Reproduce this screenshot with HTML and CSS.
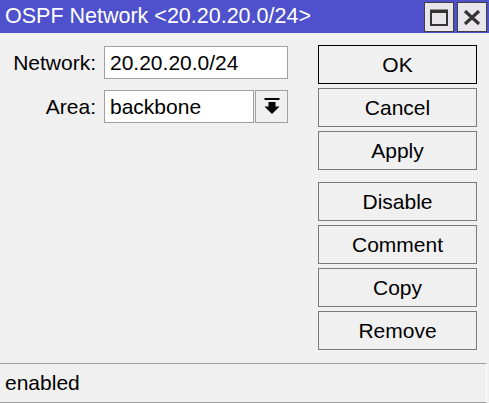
FILE: index.html
```html
<!DOCTYPE html>
<html>
<head>
<meta charset="utf-8">
<link rel="stylesheet" href="styles.css">
</head>
<body>
<div class="window">
  <div class="titlebar">
    <span class="title">OSPF Network &lt;20.20.20.0/24&gt;</span>
    <div class="tbtns">
      <div class="tbtn">
        <svg width="18" height="17" viewBox="0 0 18 17"><rect x="1" y="1.5" width="16" height="14.5" fill="none" stroke="#333" stroke-width="2"/><rect x="1" y="1" width="16" height="3" fill="#333"/></svg>
      </div>
      <div class="tbtn">
        <svg width="18" height="15" viewBox="0 0 18 15"><path d="M2 1 L16 14 M16 1 L2 14" stroke="#333" stroke-width="3.2"/></svg>
      </div>
    </div>
  </div>
  <div class="main">
    <div class="form">
      <div class="row">
        <label class="lbl">Network:</label>
        <div class="field wide">20.20.20.0/24</div>
      </div>
      <div class="row">
        <label class="lbl">Area:</label>
        <div class="field narrow">backbone</div>
        <div class="drop">
          <svg width="16" height="17" viewBox="0 0 16 17"><rect x="0.5" y="0" width="15" height="2" fill="#000"/><rect x="4.5" y="4" width="7" height="5" fill="#000"/><path d="M0.5 8.5 L15.5 8.5 L8 16 Z" fill="#000"/></svg>
        </div>
      </div>
    </div>
    <div class="buttons">
      <div class="btn default">OK</div>
      <div class="btn">Cancel</div>
      <div class="btn">Apply</div>
      <div class="btn sep">Disable</div>
      <div class="btn">Comment</div>
      <div class="btn">Copy</div>
      <div class="btn">Remove</div>
    </div>
  </div>
  <div class="status">enabled</div>
</div>
</body>
</html>
```

FILE: styles.css
```css
html, body {
  margin: 0;
  padding: 0;
  background: #f0f0f0;
}
body {
  font-family: "Liberation Sans", Arial, sans-serif;
  font-size: 21px;
  color: #000;
}
.window {
  width: 489px;
  height: 403px;
  display: flex;
  flex-direction: column;
}
.titlebar {
  height: 33px;
  background: #4e50cc;
  color: #fff;
  display: flex;
  align-items: center;
  justify-content: space-between;
  padding-left: 5px;
  padding-right: 2px;
  box-sizing: border-box;
}
.title {
  font-size: 21.5px;
  line-height: 33px;
  margin-top: -1px;
}
.tbtns {
  display: flex;
  gap: 3px;
  align-self: flex-start;
  margin-top: 2px;
}
.tbtn {
  width: 30px;
  height: 30px;
  box-sizing: border-box;
  background: #e8e6ea;
  border: 1px solid #404040;
  display: flex;
  align-items: center;
  justify-content: center;
}
.main {
  flex: 1;
  display: flex;
  justify-content: space-between;
  padding-top: 12px;
  padding-right: 12px;
}
.form {
  display: flex;
  flex-direction: column;
  gap: 11px;
  padding-top: 1px;
}
.row {
  display: flex;
  align-items: center;
}
.lbl {
  width: 96px;
  text-align: right;
  margin-right: 8px;
}
.field {
  height: 33px;
  box-sizing: border-box;
  background: #fff;
  border: 1px solid #a0a0a0;
  padding-left: 5px;
  line-height: 31px;
}
.wide { width: 184px; }
.narrow { width: 150px; }
.drop {
  width: 33px;
  height: 33px;
  box-sizing: border-box;
  margin-left: 1px;
  border: 1px solid #a0a0a0;
  background: #f0f0f0;
  display: flex;
  align-items: center;
  justify-content: center;
}
.buttons {
  width: 159px;
  display: flex;
  flex-direction: column;
  gap: 4px;
}
.btn {
  height: 39px;
  box-sizing: border-box;
  border: 1px solid #7a7a7a;
  background: #f0f0f0;
  display: flex;
  align-items: center;
  justify-content: center;
}
.btn.default {
  border-color: #000;
}
.btn.sep {
  margin-top: 8px;
}
.status {
  height: 40px;
  box-sizing: border-box;
  border-top: 1px solid #a0a0a0;
  border-bottom: 1px solid #a0a0a0;
  border-right: 1px solid #fff;
  margin-right: 2px;
  padding-left: 5px;
  line-height: 37px;
}
```
